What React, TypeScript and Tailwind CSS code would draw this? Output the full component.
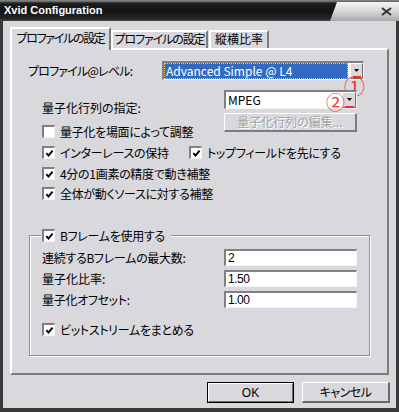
import React from "react";

const BODY = "bg-[#d9d9dd]";

function Check({ checked = true }: { checked?: boolean }) {
  return (
    <span className="relative inline-flex items-center justify-center box-border w-[13px] h-[13px] shrink-0 bg-white border-t-2 border-l-2 border-t-[#808080] border-l-[#808080] border-r border-b border-r-[#f4f4f4] border-b-[#f4f4f4]">
      {checked && (
        <svg width="9" height="9" viewBox="0 0 9 9">
          <path d="M1.3 4.2 L3.5 6.6 L7.6 1.6" fill="none" stroke="#000" strokeWidth="1.9" />
        </svg>
      )}
    </span>
  );
}

function CheckRow({ label, w }: { label: string; w?: string }) {
  return (
    <div className={"flex items-center h-[13px] gap-[5px] " + (w ?? "")}>
      <Check />
      <span className="leading-[13px] whitespace-nowrap tracking-[-0.3px]">{label}</span>
    </div>
  );
}

function Arrow() {
  return (
    <svg width="5" height="3" viewBox="0 0 5 3" className="shrink-0">
      <polygon points="0,0 5,0 2.5,3" fill="#000" />
    </svg>
  );
}

function Input({ value }: { value: string }) {
  return (
    <div className="box-border w-[133px] h-[17px] bg-white border-t-2 border-l-2 border-t-[#808080] border-l-[#808080] border-r border-b border-r-[#f4f4f4] border-b-[#f4f4f4] pl-[2px] flex items-center leading-[14px] [font-family:'Liberation_Sans',Arial,sans-serif] text-[12px] tracking-[-0.5px]">
      {value}
    </div>
  );
}

export default function App() {
  return (
    <div className="w-[399px] h-[412px] bg-[#3a3a3a] flex flex-col overflow-hidden text-black text-[12px] font-['Noto_Sans_CJK_JP',sans-serif] [font-feature-settings:'palt']">
      {/* Title bar */}
      <div className="h-[21px] shrink-0 flex bg-[linear-gradient(to_bottom,#8c8c8c_0px,#5c5c5c_2px,#1e1e1e_3px,#141414_11px,#262626_19px,#4a4a4a_21px)]">
        <div className="pl-[4px] pt-[4px] text-white font-bold text-[11px] leading-[13px] font-['Liberation_Sans',Arial,sans-serif] whitespace-nowrap">
          Xvid Configuration
        </div>
        <div className="ml-auto w-[69px] h-full flex items-center justify-end pr-[7px] pt-[1px] bg-[linear-gradient(to_bottom,#fbfbfb,#d6d6d6_55%,#a9a9a9)] [clip-path:polygon(7px_2px,100%_2px,100%_100%,0_100%)]">
          <svg width="11" height="9" viewBox="0 0 11 9">
            <path d="M1 1 L10 8 M10 1 L1 8" stroke="#3a3a3a" strokeWidth="2.2" fill="none" />
          </svg>
        </div>
      </div>

      {/* Body */}
      <div className={"flex-1 mx-[3px] mb-[4px] flex flex-col " + BODY}>
        {/* Tabs */}
        <div className="relative z-10 mt-[6px] pl-[7px] h-[21px] flex items-start">
          <div className={"box-border w-[101px] h-[23px] border-l-2 border-t-2 border-l-white border-t-white border-r-2 border-r-[#7c7c7c] pt-[2px] text-center leading-[14px] whitespace-nowrap tracking-[-1.3px] " + BODY}>
            プロファイルの設定
          </div>
          <div className={"box-border mt-[3px] w-[97px] h-[18px] border-l-2 border-t-2 border-l-white border-t-white border-r-2 border-r-[#7c7c7c] text-center leading-[14px] whitespace-nowrap tracking-[-1.1px] " + BODY}>
            プロファイルの設定
          </div>
          <div className={"box-border mt-[3px] ml-[1px] w-[60px] h-[18px] border-l-2 border-t-2 border-l-white border-t-white border-r-2 border-r-[#7c7c7c] text-center leading-[14px] whitespace-nowrap " + BODY}>
            縦横比率
          </div>
        </div>

        {/* Panel */}
        <div className="box-border mx-[7px] h-[327px] border-l-2 border-t-2 border-l-white border-t-white border-r-2 border-b-2 border-r-[#7c7c7c] border-b-[#7c7c7c] flex flex-col">
          {/* Row A */}
          <div className="mt-[11px] h-[19px] flex items-center pl-[16px]">
            <div className="w-[134px] leading-[14px] whitespace-nowrap tracking-[-0.8px]">プロファイル@レベル:</div>
            <div className="relative box-border w-[202px] h-[19px] bg-white border-t-2 border-l-2 border-t-[#808080] border-l-[#808080] border-r border-b border-r-[#f4f4f4] border-b-[#f4f4f4] flex">
              <div className="flex-1 mr-[2px] box-border bg-[#316ac5] border border-dotted border-[#e8c870] text-white pl-[1px] leading-[14px] whitespace-nowrap overflow-hidden">
                Advanced Simple @ L4
              </div>
              <div className={"box-border w-[13px] h-full border-t border-l border-t-white border-l-white border-r border-b border-r-[#6c6c6c] border-b-[#6c6c6c] flex flex-col items-center pt-[5px] " + BODY}>
                <Arrow />
                <div className="mt-[4px] w-[8px] h-[2px] bg-[#ff2020]" />
              </div>
              <span className="absolute right-[-2px] top-[12px] text-[21px] leading-[21px] text-[#ff2a2a] [font-feature-settings:normal]">①</span>
            </div>
          </div>

          {/* Row B */}
          <div className="mt-[10px] flex">
            <div className="w-[212px] pl-[30px] flex flex-col">
              <div className="mt-[11px] leading-[14px] whitespace-nowrap">量子化行列の指定:</div>
              <div className="mt-[10px]">
                <div className="flex items-center h-[13px] gap-[5px]">
                  <Check checked={false} />
                  <span className="leading-[13px] whitespace-nowrap tracking-[-0.3px]">量子化を場面によって調整</span>
                </div>
              </div>
            </div>
            <div className="w-[133px] flex flex-col">
              <div className="relative box-border h-[19px] bg-white border-t-2 border-l-2 border-t-[#808080] border-l-[#808080] border-r border-b border-r-[#f4f4f4] border-b-[#f4f4f4] flex">
                <div className="flex-1 pl-[2px] leading-[15px] whitespace-nowrap">MPEG</div>
                <div className={"box-border w-[14px] h-full border-t border-l border-t-white border-l-white border-r border-b border-r-[#6c6c6c] border-b-[#6c6c6c] flex flex-col items-center pt-[5px] " + BODY}>
                  <Arrow />
                  <div className="mt-[5px] w-[9px] h-[2px] bg-[#ff2020]" />
                </div>
                <span className="absolute right-[11px] top-[0px] text-[19px] leading-[19px] text-[#ff2a2a] [font-feature-settings:normal]">②</span>
              </div>
              <div className="mt-[4px] box-border h-[19px] border-t border-l border-t-white border-l-white border-r-2 border-b-2 border-r-[#7c7c7c] border-b-[#7c7c7c] flex items-center justify-center leading-[14px] text-[#a2a2a6] [text-shadow:1px_1px_0_#ffffff] whitespace-nowrap">
                量子化行列の編集...
              </div>
            </div>
          </div>

          {/* Rows 2-4 */}
          <div className="pl-[30px] flex flex-col">
            <div className="mt-[8px] flex">
              <CheckRow label="インターレースの保持" w="w-[147px]" />
              <CheckRow label="トップフィールドを先にする" />
            </div>
            <div className="mt-[8px]">
              <CheckRow label="4分の1画素の精度で動き補整" />
            </div>
            <div className="mt-[7px]">
              <CheckRow label="全体が動くソースに対する補整" />
            </div>
          </div>

          {/* Group box */}
          <div className="relative mt-[35px] ml-[17px] box-border w-[341px] h-[121px] border border-[#8e8e92] [box-shadow:inset_1px_1px_0_#ffffff,1px_1px_0_#ffffff] flex flex-col pl-[12px]">
            <div className={"absolute left-[11px] top-[-7px] pl-[1px] pr-[6px] flex items-center gap-[5px] h-[13px] " + BODY}>
              <Check />
              <span className="leading-[13px] whitespace-nowrap tracking-[-0.3px]">Bフレームを使用する</span>
            </div>
            <div className="mt-[13px] h-[17px] flex items-center">
              <div className="w-[182px] leading-[14px] whitespace-nowrap tracking-[-0.3px]">連続するBフレームの最大数:</div>
              <Input value="2" />
            </div>
            <div className="mt-[4px] h-[17px] flex items-center">
              <div className="w-[182px] leading-[14px] whitespace-nowrap">量子化比率:</div>
              <Input value="1.50" />
            </div>
            <div className="mt-[4px] h-[17px] flex items-center">
              <div className="w-[182px] leading-[14px] whitespace-nowrap tracking-[-0.3px]">量子化オフセット:</div>
              <Input value="1.00" />
            </div>
            <div className="mt-[15px]">
              <CheckRow label="ビットストリームをまとめる" />
            </div>
          </div>
        </div>

        {/* Buttons */}
        <div className="mt-[7px] h-[21px] flex justify-end gap-[8px] pr-[6px]">
          <div className="box-border w-[87px] h-[21px] border border-black">
            <div className="box-border h-full border-t border-l border-t-white border-l-white border-r border-b border-r-[#6c6c6c] border-b-[#6c6c6c] flex items-center justify-center leading-[14px] font-['Liberation_Sans',Arial,sans-serif]">
              OK
            </div>
          </div>
          <div className="box-border w-[88px] h-[21px] border-t border-l border-t-white border-l-white border-r-2 border-b-2 border-r-[#6a6a6a] border-b-[#6a6a6a] flex items-center justify-center leading-[14px] whitespace-nowrap tracking-[-0.5px]">
            キャンセル
          </div>
        </div>
      </div>
    </div>
  );
}
